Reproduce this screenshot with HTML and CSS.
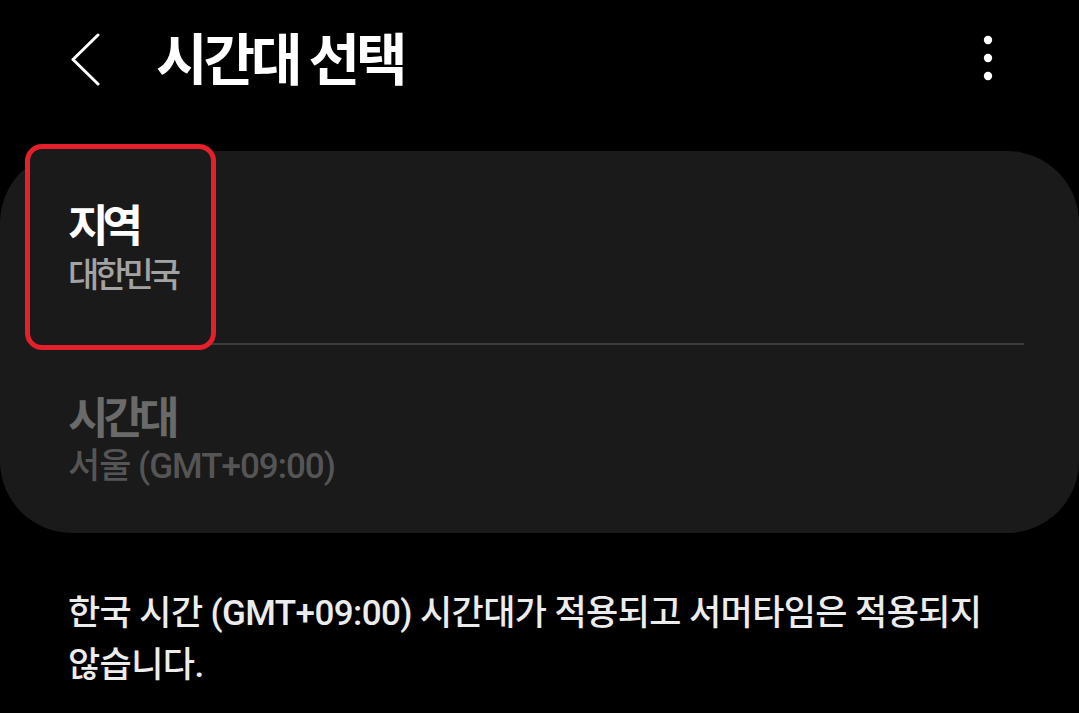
FILE: index.html
```html
<!DOCTYPE html>
<html lang="ko">
<head>
<meta charset="utf-8">
<title>시간대 선택</title>
<link rel="stylesheet" href="styles.css">
</head>
<body>
<div class="screen">
  <header class="appbar">
    <button class="back" aria-label="뒤로">
      <svg width="30" height="56" viewBox="0 0 30 56"><polyline points="27,3 2,27.5 27,52" fill="none" stroke="#fff" stroke-width="3" stroke-linecap="round" stroke-linejoin="round"/></svg>
    </button>
    <h1 class="title">시간대 선택</h1>
    <button class="more" aria-label="더보기">
      <svg width="10" height="46" viewBox="0 0 10 46"><circle cx="5" cy="5" r="4.2" fill="#fff"/><circle cx="5" cy="23" r="4.2" fill="#fff"/><circle cx="5" cy="41" r="4.2" fill="#fff"/></svg>
    </button>
  </header>

  <section class="card">
    <div class="row row-first">
      <div class="highlight"></div>
      <div class="item">
        <div class="item-title">지역</div>
        <div class="item-sub">대한민국</div>
      </div>
    </div>
    <div class="divider"></div>
    <div class="row row-second disabled">
      <div class="item">
        <div class="item-title">시간대</div>
        <div class="item-sub">서울 (GMT+09:00)</div>
      </div>
    </div>
  </section>

  <p class="note">한국 시간 (GMT+09:00) 시간대가 적용되고 서머타임은 적용되지<br>않습니다.</p>
</div>
</body>
</html>
```

FILE: styles.css
```css
html, body {
  margin: 0;
  padding: 0;
  background: #000;
}
.screen {
  width: 1079px;
  height: 713px;
  overflow: hidden;
  background: #000;
  font-family: Roboto, "Noto Sans CJK KR", sans-serif;
  color: #fff;
}
.appbar {
  height: 122px;
  display: flex;
  align-items: center;
  padding-left: 71px;
  padding-right: 86px;
}
.back, .more {
  background: none;
  border: 0;
  padding: 0;
  display: flex;
  align-items: center;
}
.back {
  margin-top: -2px;
}
.title {
  margin: 0 0 0 55px;
  font-size: 56px;
  font-weight: 700;
  letter-spacing: -4px;
  line-height: 1;
  flex: 1;
}
.more {
  margin-top: -7px;
}
.card {
  margin-top: 29px;
  background: #1a1a1a;
  border-radius: 72px;
  height: 382px;
  display: flex;
  flex-direction: column;
}
.row {
  padding-left: 68px;
  display: flex;
  align-items: center;
}
.row-first {
  height: 192px;
  position: relative;
  z-index: 2;
}
.row-second {
  flex: 1;
}
.item {
  position: relative;
  z-index: 2;
}
.highlight {
  position: absolute;
  z-index: 1;
  left: 25px;
  top: -7px;
  width: 181px;
  height: 196px;
  border: 5px solid #e3202b;
  border-radius: 17px;
  background: #1a1a1a;
}
.item-title {
  font-size: 44px;
  font-weight: 700;
  letter-spacing: -6px;
  line-height: 56px;
}
.item-sub {
  font-size: 34px;
  font-weight: 500;
  letter-spacing: -4px;
  color: #a3a3a3;
  line-height: 40px;
}
.disabled .item-title {
  color: #6a6a6a;
  letter-spacing: -5px;
}
.disabled .item-sub {
  color: #555;
  font-size: 35px;
  letter-spacing: -1px;
}
.divider {
  height: 2px;
  margin: 0 55px 0 68px;
  background: #3c3c3c;
}
.note {
  margin: 55px 0 0 68px;
  font-size: 35px;
  font-weight: 500;
  line-height: 52px;
  letter-spacing: -0.6px;
  color: #ececec;
}
```
